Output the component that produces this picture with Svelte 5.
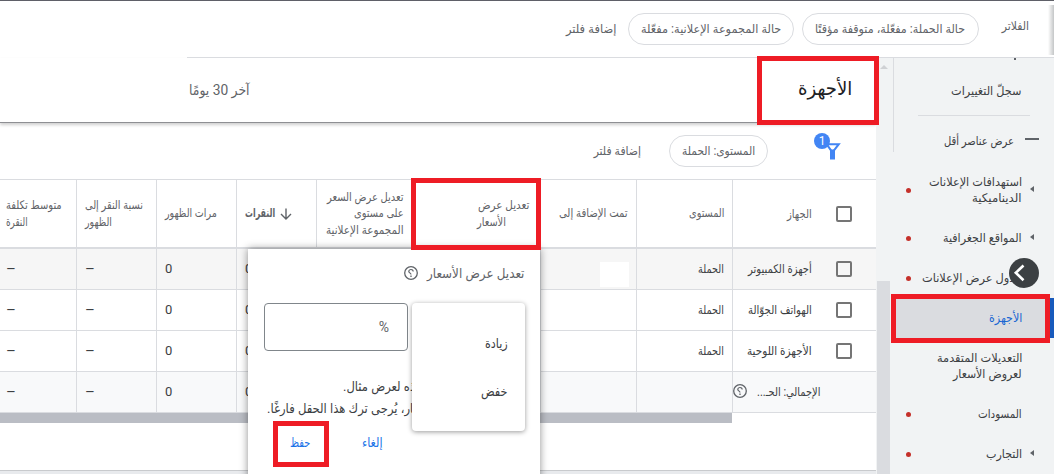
<script lang="ts">
  type Line = { text: string; width: number };

  const navItems = [
    { lines: [{ text: 'استهدافات الإعلانات', width: 93 }, { text: 'الديناميكية', width: 50 }], dot: true, caret: true },
    { lines: [{ text: 'المواقع الجغرافية', width: 79 }], dot: true, caret: true },
    { lines: [{ text: 'جدول عرض الإعلانات', width: 100 }], dot: true },
    { lines: [{ text: 'الأجهزة', width: 33 }], active: true },
    { lines: [{ text: 'التعديلات المتقدمة', width: 86 }, { text: 'لعروض الأسعار', width: 69 }] },
    { lines: [{ text: 'المسودات', width: 44 }], dot: true },
    { lines: [{ text: 'التجارب', width: 36 }], dot: true, caret: true },
  ];

  const columns: { kind: string; lines: Line[] }[] = [
    { kind: 'level', lines: [{ text: 'المستوى', width: 35 }] },
    { kind: 'added', lines: [{ text: 'تمت الإضافة إلى', width: 69 }] },
    { kind: 'bid', lines: [{ text: 'تعديل عرض', width: 52 }, { text: 'الأسعار', width: 29 }] },
    {
      kind: 'group',
      lines: [
        { text: 'تعديل عرض السعر', width: 77 },
        { text: 'على مستوى', width: 50 },
        { text: 'المجموعة الإعلانية', width: 78 },
      ],
    },
    { kind: 'clicks', lines: [{ text: 'النقرات', width: 30 }] },
    { kind: 'num', lines: [{ text: 'مرات الظهور', width: 52 }] },
    { kind: 'num', lines: [{ text: 'نسبة النقر إلى', width: 58 }, { text: 'الظهور', width: 27 }] },
    { kind: 'num last', lines: [{ text: 'متوسط تكلفة', width: 56 }, { text: 'النقرة', width: 22 }] },
  ];

  const rows = [
    { device: 'أجهزة الكمبيوتر', width: 64, selected: true },
    { device: 'الهواتف الجوّالة', width: 64 },
    { device: 'الأجهزة اللوحية', width: 65 },
  ];

  // Squeezes a run of text into the width its label is given
  function fit(node: HTMLElement, width: number) {
    const natural = node.offsetWidth;
    if (natural) node.style.transform = `scaleX(${width / natural})`;
  }
</script>

{#snippet label(text: string, width: number)}
  <span class="label" style:width="{width}px"><span class="run" use:fit={width}>{text}</span></span>
{/snippet}

{#snippet help()}
  <svg class="help" width="14" height="14" viewBox="0 0 14 14" fill="none" stroke="#5f6368">
    <circle cx="7" cy="7" r="6.3" stroke-width="1.3" />
    <path d="M9.2 5.6C9.2 4.3 8.2 3.5 7 3.5S4.8 4.4 4.8 5.5C4.8 6.9 7 6.9 7 8.6" stroke-width="1.2" />
    <path d="M7 9.6v1.3" stroke-width="1.3" />
  </svg>
{/snippet}

<div class="page" dir="rtl">
  <header class="filters">
    <span class="filters-title">{@render label('الفلاتر', 27)}</span>
    <button class="chip first">{@render label('حالة الحملة: مفعّلة، متوقفة مؤقتًا', 150)}</button>
    <button class="chip">{@render label('حالة المجموعة الإعلانية: مفعّلة', 140)}</button>
    <span class="add">{@render label('إضافة فلتر', 50)}</span>
    <span class="edge-shadow"></span>
  </header>

  <div class="body">
    <aside>
      <nav>
        <span class="clipped"></span>
        <div class="history">{@render label('سجلّ التغييرات', 71)}</div>
        <div class="fewer"><i></i>{@render label('عرض عناصر أقل', 70)}</div>
        {#each navItems as item}
          <div class="nav-item" class:two={item.lines.length > 1} class:active={item.active}>
            <span class="caret" class:shown={item.caret}></span>
            <div class="lines">
              {#each item.lines as line}{@render label(line.text, line.width)}{/each}
            </div>
            {#if item.dot}<span class="dot"></span>{/if}
          </div>
        {/each}
      </nav>
      <div class="track">
        <span class="up"></span>
        <span class="thumb"></span>
      </div>
      <button class="collapse" aria-label="collapse">
        <svg width="30" height="30" viewBox="0 0 30 30">
          <circle cx="15" cy="15" r="15" fill="#3c4043" />
          <path d="M14.5 7.5 6.8 14.8l7.7 7.4" fill="none" stroke="#fff" stroke-width="2.6" />
        </svg>
      </button>
    </aside>

    <main>
      <div class="title-bar">
        <h1>{@render label('الأجهزة', 54)}</h1>
        <span class="range">{@render label('آخر 30 يومًا', 61)}</span>
      </div>

      <div class="toolbar">
        <svg class="funnel" width="28" height="28" viewBox="0 0 28 28">
          <path d="M12.6 11.2h12.2L20 17.4v8.2h-3v-8.2z" fill="#fff" stroke="#4285f4" stroke-width="2" />
          <path d="M16.4 16.5h4.2V26h-4.2z" fill="#4285f4" />
          <circle cx="8" cy="8" r="8" fill="#4285f4" />
          <text x="8" y="12" text-anchor="middle" fill="#fff" font-size="12">1</text>
        </svg>
        <button class="chip small">{@render label('المستوى: الحملة', 73)}</button>
        <span class="add">{@render label('إضافة فلتر', 47)}</span>
      </div>

      <div class="table">
        <div class="row head">
          <div class="cell device"><span class="box"></span>{@render label('الجهاز', 25)}</div>
          {#each columns as col}
            <div class="cell {col.kind}">
              {#if col.kind === 'clicks'}
                <svg width="12" height="12" viewBox="0 0 12 12" fill="none" stroke="#5f6368" stroke-width="1.4">
                  <path d="M6 .5v10.3M1 6l5 5 5-5" />
                </svg>
              {/if}
              <div class="lines">
                {#each col.lines as line}{@render label(line.text, line.width)}{/each}
              </div>
            </div>
          {/each}
        </div>
        {#each rows as row}
          <div class="row" class:selected={row.selected}>
            <div class="cell device"><span class="box"></span>{@render label(row.device, row.width)}</div>
            <div class="cell level">{@render label('الحملة', 26)}</div>
            <div class="cell added">{#if row.selected}<span class="blank"></span>{/if}</div>
            <div class="cell bid"></div>
            <div class="cell group"></div>
            <div class="cell clicks">0</div>
            <div class="cell num">0</div>
            <div class="cell num dash">–</div>
            <div class="cell num last dash">–</div>
          </div>
        {/each}
        <div class="row total">
          <div class="cell device">{@render label('الإجمالي: الحـ...', 63)}{@render help()}</div>
          <div class="cell level"></div>
          <div class="cell added"></div>
          <div class="cell bid"></div>
          <div class="cell group"></div>
          <div class="cell clicks">0</div>
          <div class="cell num">0</div>
          <div class="cell num dash">–</div>
          <div class="cell num last dash">–</div>
        </div>
      </div>
      <div class="h-scroll"></div>
    </main>
  </div>

  <div class="popup">
    <div class="popup-title">{@render label('تعديل عرض الأسعار', 97)}{@render help()}</div>
    <div class="percent">%</div>
    <div class="hint">
      {@render label('هذه لعرض مثال.', 79)}
      {@render label('الأسعار، يُرجى ترك هذا الحقل فارغًا.', 172)}
    </div>
    <div class="actions">
      {@render label('إلغاء', 21)}
      {@render label('حفظ', 20)}
    </div>
    <div class="menu">
      <div>{@render label('زيادة', 23)}</div>
      <div>{@render label('خفض', 27)}</div>
    </div>
  </div>

  <div class="mark mark-title"></div>
  <div class="mark mark-column"></div>
  <div class="mark mark-nav"></div>
  <div class="mark mark-save"></div>
</div>

<style>
  :global(body) {
    margin: 0;
    overflow: hidden;
  }

  .page {
    position: relative;
    width: 1054px;
    height: 474px;
    box-sizing: border-box;
    overflow: hidden;
    display: flex;
    flex-direction: column;
    background: #fff;
    color: #5f6368;
    font-family: Roboto, 'DejaVu Sans Condensed', 'DejaVu Sans', sans-serif;
    font-size: 12px;
    line-height: 16px;
    border-top: 1px solid #5f6068;
  }

  button {
    padding: 0;
    border: 0;
    background: none;
    color: inherit;
    font: inherit;
    text-align: right;
  }

  .label {
    display: block;
    flex: none;
    white-space: nowrap;
  }

  .run {
    display: inline-block;
    transform-origin: right center;
  }

  .filters {
    position: relative;
    flex: none;
    display: flex;
    align-items: center;
    width: 867px;
    height: 56px;
    box-sizing: content-box;
    border-bottom: 1px solid #dadce0;
  }

  .filters-title {
    margin: 0 25px 7px 23px;
  }

  .edge-shadow {
    position: absolute;
    right: 0;
    top: 4px;
    width: 6px;
    height: 50px;
    background: linear-gradient(to right, transparent, #c4c6c7);
  }

  .chip {
    width: 177px;
    height: 32px;
    box-sizing: border-box;
    padding-right: 13px;
    margin-left: 8px;
    border: 1px solid #dadce0;
    border-radius: 16px;
  }

  .chip + .chip {
    width: 166px;
    padding-right: 12px;
    margin-left: 12px;
  }

  .body {
    flex: 1;
    display: flex;
    min-height: 0;
  }

  aside {
    position: relative;
    width: 178px;
    display: flex;
    background: #f1f3f4;
    color: #3c4043;
  }

  nav {
    width: 163px;
    display: flex;
    flex-direction: column;
  }

  .clipped {
    width: 2px;
    height: 2px;
    margin-right: 38px;
    background: #5f6368;
  }

  .history {
    display: flex;
    align-items: center;
    height: 50px;
    width: 104px;
    padding: 6px 8px 0 0;
    margin-right: 24px;
    border-bottom: 1px solid #dadce0;
  }

  .fewer {
    display: flex;
    align-items: center;
    height: 46px;
    padding: 4px 15px 0 0;
    box-sizing: border-box;
    gap: 11px;
  }

  .fewer i {
    width: 14px;
    height: 2px;
    margin-bottom: 5px;
    background: #5f6368;
  }

  .nav-item {
    position: relative;
    flex: none;
    display: flex;
    align-items: center;
    height: 40px;
    padding-right: 20px;
    box-sizing: border-box;
  }

  .nav-item.two {
    height: 56px;
  }

  .nav-item.active {
    background: #dadce0;
    color: #1967d2;
    border-right: 4px solid #185abc;
    padding-right: 16px;
  }

  .caret {
    width: 4px;
    margin-left: 8px;
  }

  .caret.shown {
    width: 0;
    border: 3.5px solid transparent;
    border-left: 0;
    border-right: 4px solid #5f6368;
    margin-bottom: 3px;
  }

  /* points at the label's far side */
  .caret.shown {
    border-right: 4px solid #5f6368;
  }

  .dot {
    position: absolute;
    left: 15px;
    width: 5px;
    height: 5px;
    border-radius: 50%;
    background: #c5302a;
  }

  .track {
    position: relative;
    width: 15px;
    display: flex;
    flex-direction: column;
    align-items: center;
  }

  .track::before {
    content: '';
    position: absolute;
    right: -3px;
    top: 0;
    width: 1px;
    height: 94px;
    background: #dadce0;
  }

  .up {
    margin-top: 7px;
    border: 4px solid transparent;
    border-top: 0;
    border-bottom: 4px solid #cfd1d4;
  }

  .thumb {
    width: 13px;
    margin-top: 212px;
    flex: 1;
    background: #dadce0;
  }

  .collapse {
    position: absolute;
    right: 15px;
    top: 200px;
    width: 30px;
    height: 30px;
    display: flex;
  }

  main {
    width: 876px;
    display: flex;
    flex-direction: column;
    background: #fff;
  }

  .title-bar {
    height: 64px;
    display: flex;
    justify-content: space-between;
    align-items: center;
    padding: 0 24px 0 189px;
    border-bottom: 1px solid #8e8f93;
    box-shadow: 0 2px 3px #00000030;
  }

  h1 {
    margin: 0 0 3px;
    color: #202124;
    font-size: 19px;
    font-weight: 400;
    line-height: 28px;
  }

  .range {
    font-size: 14px;
  }

  .toolbar {
    height: 56px;
    display: flex;
    align-items: center;
    padding-right: 34px;
  }

  .funnel {
    margin: 0 0 8px 46px;
  }

  .chip.small {
    width: 99px;
    padding-right: 12px;
    margin-left: 28px;
  }

  .row {
    display: flex;
    height: 41px;
    box-sizing: border-box;
    border-bottom: 1px solid #dadce0;
    color: #3c4043;
  }

  .head {
    height: 70px;
    border-top: 1px solid #dadce0;
    border-bottom-width: 2px;
    color: #5f6368;
  }

  .selected {
    background: #f6f6f6;
  }

  .total {
    background: #f8f9fa;
  }

  .cell {
    flex: none;
    display: flex;
    align-items: center;
    width: 96px;
    box-sizing: border-box;
    border-left: 1px solid #dadce0;
    padding-right: 8px;
  }

  .head .lines .label {
    line-height: 16.5px;
  }

  .cell.device {
    width: 144px;
    padding-right: 24px;
  }

  .box {
    width: 16px;
    height: 16px;
    box-sizing: border-box;
    margin-left: 24px;
    border: 2px solid #757575;
    border-radius: 2px;
  }

  .total .device {
    padding-right: 56px;
    gap: 10px;
  }

  .total .help {
    margin-bottom: 3px;
  }

  .blank {
    width: 29px;
    height: 25px;
    margin: 10px -1px 0 0;
    background: #fff;
  }

  .cell.bid {
    width: 128px;
    padding-right: 11px;
  }

  .bid .lines {
    display: flex;
    flex-direction: column;
    align-items: flex-end;
  }

  .cell.clicks,
  .cell.num {
    width: 80px;
    padding: 0 0 0 8px;
    justify-content: flex-end;
    font-size: 13px;
  }

  .head .clicks,
  .head .num {
    font-size: 12px;
  }

  .cell.dash {
    font-size: 15px;
  }

  .clicks svg {
    margin-left: 5px;
  }

  .clicks .lines {
    font-weight: 700;
  }

  .num .lines {
    display: flex;
    flex-direction: column;
    align-items: flex-end;
  }

  .cell.last {
    width: 76px;
    padding-left: 6px;
    border-left: 0;
  }

  .h-scroll {
    width: 732px;
    height: 10px;
    align-self: flex-end;
    background: #babdc4;
  }

  main::after {
    content: '';
    margin-top: auto;
    height: 3px;
    background: #e8eaed;
    border-top: 1px solid #c8cacd;
  }

  .popup {
    position: absolute;
    left: 248px;
    top: 248px;
    width: 292px;
    height: 240px;
    background: #fff;
    box-shadow: 0 0 8px #00000070;
  }

  .popup-title {
    display: flex;
    align-items: center;
    gap: 9px;
    height: 48px;
    padding-right: 16px;
    font-size: 13.5px;
  }

  .percent {
    width: 144px;
    height: 48px;
    box-sizing: border-box;
    margin: 6px 132px 0 0;
    padding-right: 18px;
    border: 1px solid #80868b;
    border-radius: 4px;
    font-size: 14px;
    line-height: 47px;
  }

  .hint {
    display: flex;
    flex-direction: column;
    align-items: flex-end;
    height: 80px;
    box-sizing: border-box;
    padding: 24px 0 0 19px;
    font-size: 13.5px;
    line-height: 22px;
    color: #3c4043;
  }

  .hint .label:first-child {
    margin-left: 76px;
  }

  .actions {
    display: flex;
    gap: 52px;
    padding: 4px 157px 0 0;
    color: #1a73e8;
    font-size: 13px;
  }

  .menu {
    position: absolute;
    right: 15px;
    top: 54px;
    width: 113px;
    height: 128px;
    box-sizing: border-box;
    padding: 16px 17px 0 0;
    border-radius: 4px;
    background: #fff;
    box-shadow: 0 1px 5px #00000066;
    color: #3c4043;
    font-size: 13.5px;
  }

  .menu div {
    height: 48px;
    line-height: 48px;
  }

  .mark {
    position: absolute;
    box-sizing: border-box;
    border: 5px solid #ee1c25;
  }

  .mark-title {
    left: 757px;
    top: 55px;
    width: 122px;
    height: 69px;
  }

  .mark-column {
    left: 411px;
    top: 177px;
    width: 130px;
    height: 72px;
  }

  .mark-nav {
    left: 891px;
    top: 293px;
    width: 159px;
    height: 49px;
  }

  .mark-save {
    left: 273px;
    top: 420px;
    width: 56px;
    height: 46px;
  }
</style>
